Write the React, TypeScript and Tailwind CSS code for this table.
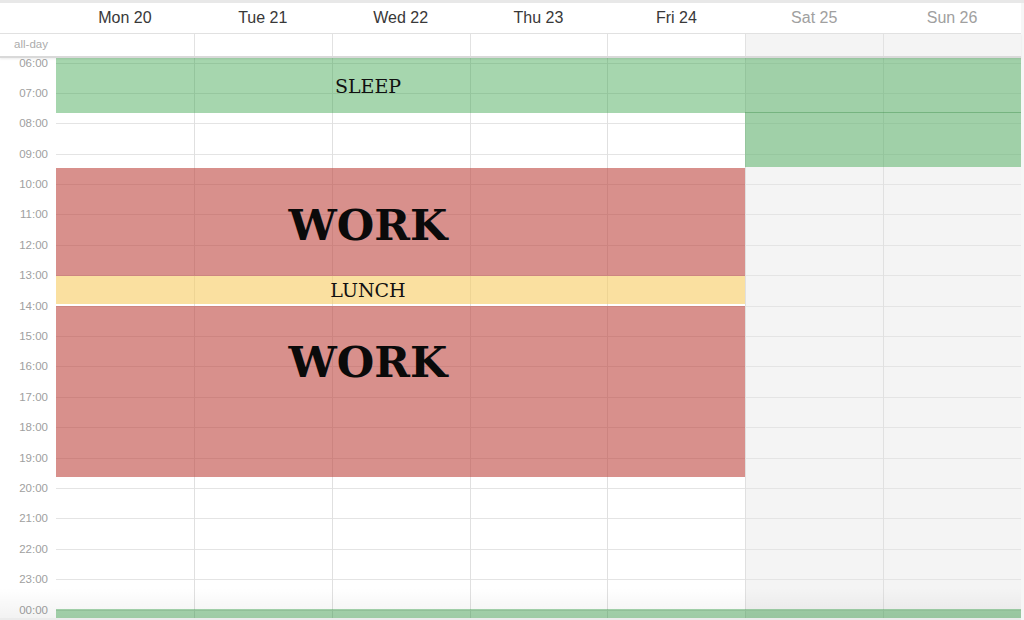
import React from 'react'

type Day = { label: string; weekend: boolean }

const days: Day[] = [
    { label: 'Mon 20', weekend: false },
    { label: 'Tue 21', weekend: false },
    { label: 'Wed 22', weekend: false },
    { label: 'Thu 23', weekend: false },
    { label: 'Fri 24', weekend: false },
    { label: 'Sat 25', weekend: true },
    { label: 'Sun 26', weekend: true },
]

const hours = Array.from({ length: 19 }, (_, i) => `${String((i + 6) % 24).padStart(2, '0')}:00`)

export default function App() {
    return (
        <div className="w-[1024px] h-[620px] overflow-hidden bg-[#f6f6f6] font-['Liberation_Sans',Arial,sans-serif] flex flex-col">
            <div className="h-[3px] bg-[#e8e8e8]" />
            <div className="w-[1021px] flex-1 flex flex-col bg-white min-h-0">
                {/* day headers */}
                <div className="flex h-[31px] border-b border-[#e2e2e2]">
                    <div className="w-[56px]" />
                    <div className="flex-1 grid grid-cols-7">
                        {days.map(d => (
                            <div
                                key={d.label}
                                className={`flex items-center justify-center text-[16px] ${d.weekend ? 'text-[#a0a0a0]' : 'text-[#383838]'}`}
                            >
                                {d.label}
                            </div>
                        ))}
                    </div>
                </div>

                {/* all-day row */}
                <div className="flex h-[24px] border-b-2 border-[#d9d9d9] shadow-[0_1px_2px_rgba(0,0,0,0.08)] relative z-10">
                    <div className="w-[56px] flex items-center justify-end pr-[8px] text-[11.5px] text-[#acacac]">all-day</div>
                    <div className="flex-1 grid grid-cols-7">
                        {days.map((d, i) => (
                            <div
                                key={d.label}
                                className={`${i > 0 ? 'border-l border-[#e2e2e2]' : ''} ${d.weekend ? 'bg-[#f4f4f4]' : ''}`}
                            />
                        ))}
                    </div>
                </div>

                {/* time grid */}
                <div className="flex flex-1 min-h-0 overflow-hidden relative">
                    <div className="w-[56px] -mt-[1.5px]">
                        {hours.map(h => (
                            <div key={h} className="h-[30.4px] pr-[8px] text-right text-[11.5px] leading-[12px] text-[#a0a0a0]">
                                {h}
                            </div>
                        ))}
                    </div>
                    <div className="flex-1 relative">
                        <div className="grid grid-cols-7 h-full">
                            {days.map((d, i) => (
                                <div
                                    key={d.label}
                                    className={`flex flex-col ${i > 0 ? 'border-l border-[#e0e0e0]' : ''} ${d.weekend ? 'bg-[#f4f4f4]' : ''}`}
                                >
                                    <div className="h-[4.5px] shrink-0" />
                                    {hours.map(h => (
                                        <div key={h} className="h-[30.4px] shrink-0 border-t border-[#e4e4e4]" />
                                    ))}
                                </div>
                            ))}
                        </div>

                        {/* events */}
                        <div className="absolute left-0 top-0 w-[689px] h-[55px] bg-[rgba(57,164,75,0.45)]">
                            <div className="w-[624px] pt-[19px] text-center font-['DejaVu_Serif',serif] text-[19px] leading-none text-[#111]">SLEEP</div>
                        </div>
                        <div className="absolute left-[689px] top-0 w-[276px] h-[55px] bg-[rgba(57,164,75,0.45)] border-b border-[rgba(40,130,55,0.35)]" />
                        <div className="absolute left-[689px] top-[55px] w-[276px] h-[54px] bg-[rgba(57,164,75,0.45)]" />

                        <div className="absolute left-0 top-[110px] w-[689px] h-[108px] bg-[rgba(190,70,63,0.6)]">
                            <div className="w-[624px] pt-[36px] text-center font-['DejaVu_Serif',serif] font-bold text-[43px] leading-none text-[#0a0a0a]">WORK</div>
                        </div>
                        <div className="absolute left-0 top-[218px] w-[689px] h-[28px] bg-[rgba(247,203,97,0.6)]">
                            <div className="w-[624px] pt-[5px] text-center font-['DejaVu_Serif',serif] text-[19px] leading-none text-[#111]">LUNCH</div>
                        </div>
                        <div className="absolute left-0 top-[248px] w-[689px] h-[171px] bg-[rgba(190,70,63,0.6)]">
                            <div className="w-[624px] pt-[35px] text-center font-['DejaVu_Serif',serif] font-bold text-[43px] leading-none text-[#0a0a0a]">WORK</div>
                        </div>

                        <div className="absolute left-0 top-[551px] w-[965px] h-[9px] bg-[rgba(57,164,75,0.45)]" />
                    </div>

                    <div className="absolute left-0 right-0 bottom-[2px] h-[30px] bg-linear-to-b from-transparent to-black/5 pointer-events-none" />
                    <div className="absolute left-0 right-0 bottom-0 h-[2px] bg-[#ebebeb]" />
                </div>
            </div>
        </div>
    )
}
